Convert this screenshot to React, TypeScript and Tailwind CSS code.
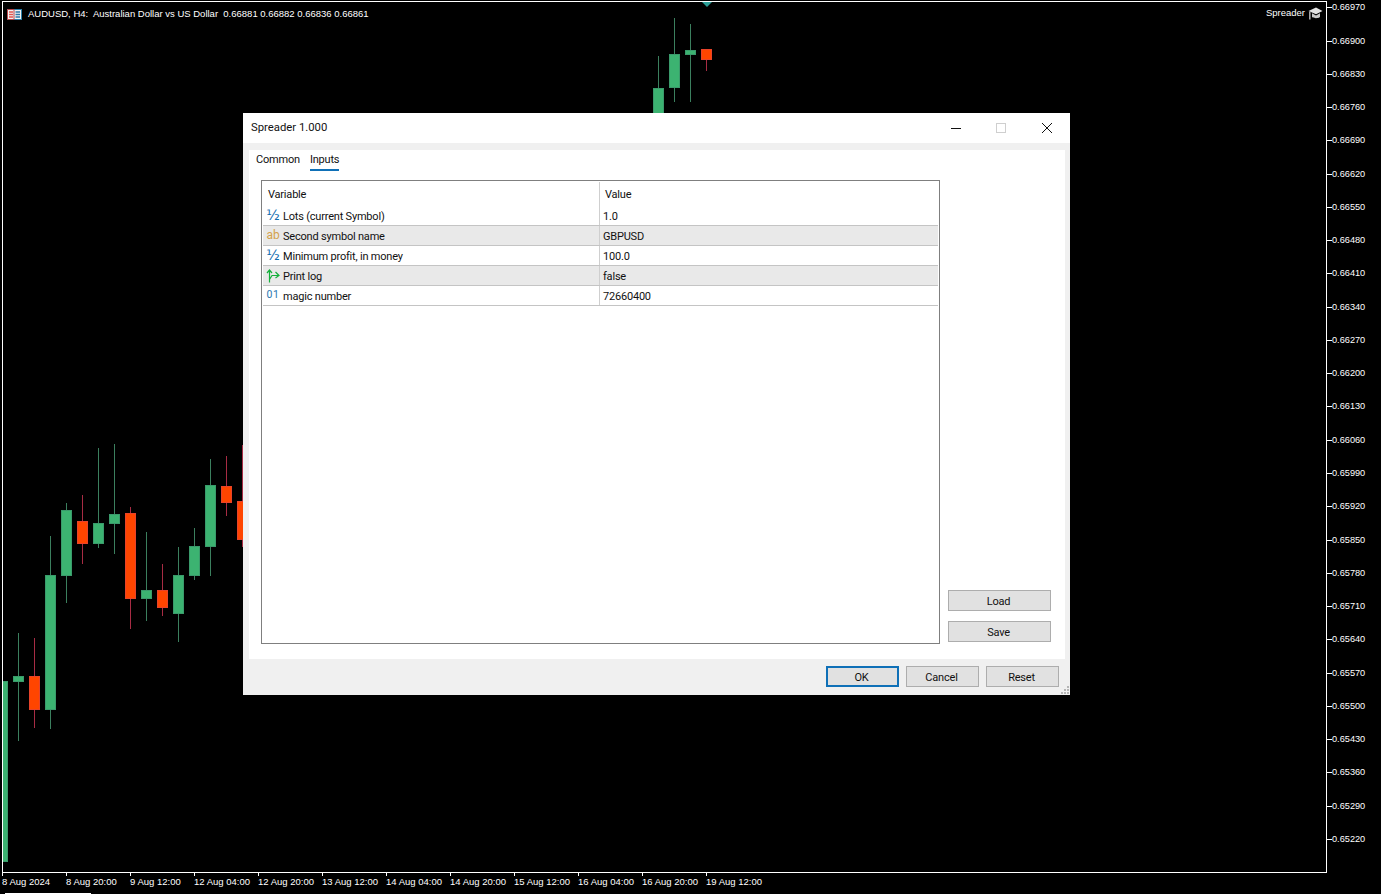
const prices = [
  '0.66970', '0.66900', '0.66830', '0.66760', '0.66690', '0.66620', '0.66550', '0.66480', '0.66410',
  '0.66340', '0.66270', '0.66200', '0.66130', '0.66060', '0.65990', '0.65920', '0.65850', '0.65780',
  '0.65710', '0.65640', '0.65570', '0.65500', '0.65430', '0.65360', '0.65290', '0.65220',
]

const times = [
  '8 Aug 2024', '8 Aug 20:00', '9 Aug 12:00', '12 Aug 04:00', '12 Aug 20:00', '13 Aug 12:00',
  '14 Aug 04:00', '14 Aug 20:00', '15 Aug 12:00', '16 Aug 04:00', '16 Aug 20:00', '19 Aug 12:00',
]

// x centre, wick top, wick bottom, body top, body bottom, up?
const candles: [number, number, number, number, number, boolean][] = [
  [2, 681, 862, 681, 862, true],
  [18, 633, 741, 676, 682, true],
  [34, 638, 728, 676, 710, false],
  [50, 536, 729, 575, 710, true],
  [66, 503, 603, 510, 576, true],
  [82, 495, 564, 521, 544, false],
  [98, 448, 548, 523, 544, true],
  [114, 444, 554, 514, 524, true],
  [130, 507, 629, 513, 599, false],
  [146, 532, 621, 590, 599, true],
  [162, 564, 616, 590, 608, false],
  [178, 547, 642, 575, 614, true],
  [194, 528, 580, 546, 576, true],
  [210, 459, 576, 485, 547, true],
  [226, 456, 516, 486, 503, false],
  [242, 445, 547, 501, 540, false],
  [658, 56, 120, 88, 120, true],
  [674, 18, 102, 54, 88, true],
  [690, 24, 102, 50, 55, true],
  [706, 49, 71, 49, 60, false],
]

const rows = [
  {kind: 'half', name: 'Lots (current Symbol)', value: '1.0'},
  {kind: 'ab', name: 'Second symbol name', value: 'GBPUSD'},
  {kind: 'half', name: 'Minimum profit, in money', value: '100.0'},
  {kind: 'bool', name: 'Print log', value: 'false'},
  {kind: 'int', name: 'magic number', value: '72660400'},
]

function Candles() {
  return (
    <svg width="1323" height="870" viewBox="3 2 1323 870" className="block">
      {candles.map(([x, wt, wb, bt, bb, up]) => (
        <g key={x}>
          <rect x={x} y={wt} width="1" height={wb - wt} fill={up ? '#3b7f5e' : '#a82c44'} />
          <rect
            x={x - 5 + 0.5}
            y={bt + 0.5}
            width="10"
            height={bb - bt - 1}
            fill={up ? '#3cb371' : '#ff4500'}
            stroke={up ? '#3a9a6b' : '#e8432a'}
          />
        </g>
      ))}
      <path d="M702 2h10l-5 5z" fill="#2a9d96" />
    </svg>
  )
}

function RowIcon({kind}: {kind: string}) {
  if (kind === 'half') return <span className="pb-[2px] font-['DejaVu_Sans',sans-serif] text-[14px] leading-none font-medium text-[#0f6cb0]">½</span>
  if (kind === 'ab') return <span className="pb-[2px] text-[12px] leading-none text-[#d4a24c]">ab</span>
  if (kind === 'int') return <span className="text-[10.5px] leading-none tracking-[0.5px] text-[#2a78b0]">01</span>
  return (
    <svg width="14" height="14" viewBox="0 0 14 14" fill="none" stroke="#14b03a" strokeWidth="1.2">
      <path d="M3.5 13.5V1M1 4l2.5-3L6 4M3.5 10.5 6 6.5h7M9.5 3l3.5 3.5L9.5 9" />
    </svg>
  )
}

function Btn({label, primary, className}: {label: string; primary?: boolean; className: string}) {
  return (
    <button
      type="button"
      className={[
        'flex h-[21px] items-center justify-center bg-[#e1e1e1] pt-[4px] pr-[2px] text-[11px] tracking-[-0.2px] text-[#111]',
        primary ? 'border-2 border-[#0f70b7]' : 'border border-[#adadad]',
        className,
      ].join(' ')}
    >
      {label}
    </button>
  )
}

export default function App() {
  return (
    <div className="relative h-[894px] w-[1381px] overflow-hidden bg-black font-['Liberation_Sans',sans-serif] text-[9.5px] text-white">
      <div className="flex h-[873px] pt-px">
        <div className="relative ml-[2px] h-[872px] w-[1325px] border border-white">
          <div className="absolute top-0 left-0 overflow-hidden">
            <Candles />
          </div>
          <div className="absolute top-[5px] left-[4px] flex items-center gap-[6px]">
            <svg width="15" height="11" viewBox="0 0 15 11">
              <rect x="0.5" y="0.5" width="14" height="10" fill="#f3f3f3" stroke="#2c7fa8" />
              <path d="M0.5 0.5h6.5v10H0.5z" fill="#f3f3f3" stroke="#b8474a" />
              <path d="M2 3h4M2 5.5h4M2 8h4" stroke="#e2564f" strokeWidth="1.4" />
              <path d="M8.5 3h4.5M8.5 5.5h4.5M8.5 8h4.5" stroke="#2f78a8" strokeWidth="1.4" />
            </svg>
            <span className="whitespace-pre">AUDUSD, H4:  Australian Dollar vs US Dollar  0.66881 0.66882 0.66836 0.66861</span>
          </div>
          <div className="absolute top-[4px] right-[3px] flex items-center gap-[3px]">
            <span>Spreader</span>
            <svg width="15" height="14" viewBox="0 0 15 14">
              <path d="M0.5 5 8 1.5 14.5 5 8 8.2z" fill="#e2e2e2" />
              <path d="M4 7.2V11c2 1.6 6 1.6 8 0V7.2L8 9.4z" fill="#c9c9c9" />
              <rect x="1" y="5.5" width="1.6" height="8" fill="#a5a5a5" />
            </svg>
          </div>
        </div>
        <div className="flex flex-col pt-[1.25px] text-[9.2px]">
          {prices.map((p) => (
            <div key={p} className="flex h-[33.28px] items-start">
              <span className="mt-[5px] h-px w-[5px] bg-white" />
              <span className="leading-[11px]">{p}</span>
            </div>
          ))}
        </div>
      </div>

      <div className="ml-[2px] flex">
        {times.map((t) => (
          <div key={t} className="w-[64px] whitespace-nowrap">
            <div className="h-[3px] w-px bg-white" />
            <div className="leading-[11px]">{t}</div>
          </div>
        ))}
      </div>
      <div className="absolute top-[893px] left-[5px] h-px w-[86px] bg-white" />

      {/* dialog window */}
      <div className="absolute top-[113px] left-[243px] flex h-[582px] w-[827px] flex-col bg-[#f0f0f0] font-['Roboto',sans-serif] text-[11px] tracking-[-0.2px] text-[#111]">
        <div className="flex h-[30px] items-center bg-white pl-[8px] text-[11.3px] tracking-normal">
          <span className="pt-px">Spreader 1.000</span>
          <div className="ml-auto flex items-center">
            <svg width="12" height="12" viewBox="0 0 12 12" className="mr-[33px]">
              <path d="M1 6.5h10" stroke="#111" />
            </svg>
            <svg width="12" height="12" viewBox="0 0 12 12" className="mr-[34px]">
              <rect x="1.5" y="1.5" width="9" height="9" fill="none" stroke="#cfcfcf" />
            </svg>
            <svg width="12" height="12" viewBox="0 0 12 12" className="mr-[17px]">
              <path d="M1 1l10 10M11 1 1 11" stroke="#111" />
            </svg>
          </div>
        </div>

        <div className="mt-[7px] mr-[5px] ml-[6px] flex h-[509px] flex-col bg-white">
          <div className="flex pl-[7px]">
            <div className="mr-[10px] h-[20px] leading-[20px]">Common</div>
            <div className="h-[21px] border-b-2 border-[#0f70b7] leading-[20px]">Inputs</div>
          </div>

          <div className="flex min-h-0 flex-1 pt-[9px] pb-[15px] pl-[12px]">
            <div className="w-[679px] border border-[#7f7f7f] p-px">
              <div className="flex h-[24px] items-center">
                <div className="w-[336px] pt-[2px] pl-[5px]">Variable</div>
                <div className="h-full border-l border-[#cfcfcf] pl-[5px] leading-[26px]">Value</div>
              </div>
              {rows.map((r, i) => (
                <div
                  key={r.name}
                  className={[
                    'flex h-[20px] items-center border-b border-[#c4c4c4]',
                    i % 2 === 1 ? 'bg-[#e9e9e9]' : 'bg-white',
                  ].join(' ')}
                >
                  <div className="flex w-[336px] items-center">
                    <div className="flex w-[20px] justify-center">
                      <RowIcon kind={r.kind} />
                    </div>
                    <span className="pt-[4px]">{r.name}</span>
                  </div>
                  <div className="h-full border-l border-[#cfcfcf] pl-[3px] leading-[22px]">{r.value}</div>
                </div>
              ))}
            </div>

            <div className="ml-[8px] flex flex-col justify-end gap-[10px] pb-[2px]">
              <Btn label="Load" className="w-[103px]" />
              <Btn label="Save" className="w-[103px]" />
            </div>
          </div>
        </div>

        <div className="flex justify-end gap-[7px] pt-[7px] pr-[11px]">
          <Btn label="OK" primary className="w-[73px]" />
          <Btn label="Cancel" className="w-[73px]" />
          <Btn label="Reset" className="w-[73px]" />
        </div>

        <svg width="10" height="10" className="absolute right-0 bottom-0">
          <path d="M7 1h2v2H7zM4 4h2v2H4zM7 4h2v2H7zM1 7h2v2H1zM4 7h2v2H4zM7 7h2v2H7z" fill="#b5b5b5" />
        </svg>
      </div>
    </div>
  )
}
